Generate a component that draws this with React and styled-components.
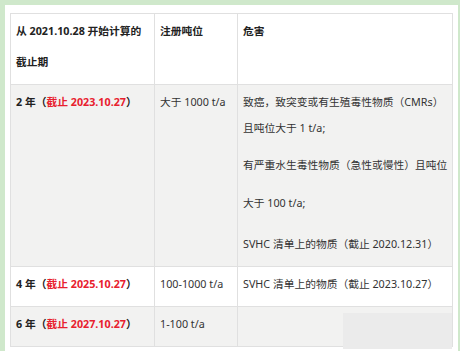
import styled, { createGlobalStyle } from "styled-components";

const GlobalStyle = createGlobalStyle`
  html, body {
    margin: 0;
    padding: 0;
    background: #cfe8cb;
  }
  body {
    font-family: "Noto Sans", "Noto Sans CJK SC", sans-serif;
    color: #333;
  }
`;

const Panel = styled.div`
  margin: 5px 2px 0 5px;
  padding: 8px 6px 0 5px;
  background: #fff;
  min-height: 100vh;
  position: relative;
`;

const Table = styled.table`
  width: 442px;
  border-collapse: collapse;
  table-layout: fixed;
  font-size: 10.75px;
`;

const Row = styled.tr`
  background: ${(props) => (props.shaded ? "#f2f2f1" : "#fff")};
`;

const Head = styled.th`
  border: 1px solid #e0e0e0;
  padding: 2px 5px 6px;
  line-height: 31px;
  text-align: left;
  vertical-align: top;
  font-weight: 700;
  color: #222;
`;

const Cell = styled.td`
  border: 1px solid #e0e0e0;
  padding: 4px 5px 9px;
  line-height: 26px;
  vertical-align: top;
  font-weight: ${(props) => (props.bold ? 700 : 400)};
  color: ${(props) => (props.bold ? "#222" : "#333")};
  white-space: nowrap;
`;

const Red = styled.span`
  color: #e8202e;
`;

const Line = styled.div`
  margin-top: ${(props) => props.gap || 0}px;
`;

const Cover = styled.div`
  position: absolute;
  left: 338px;
  top: 308px;
  width: 109px;
  height: 36px;
  background: #ebebeb;
`;

function Term({ years, date }) {
  return (
    <>
      {years} 年（<Red>截止 {date}</Red>）
    </>
  );
}

export default function App() {
  return (
    <>
      <GlobalStyle />
      <Panel>
        <Table>
          <colgroup>
            <col style={{ width: 144 }} />
            <col style={{ width: 83 }} />
            <col style={{ width: 215 }} />
          </colgroup>
          <thead>
            <Row>
              <Head>
                从 2021.10.28 开始计算的
                <br />
                截止期
              </Head>
              <Head>注册吨位</Head>
              <Head>危害</Head>
            </Row>
          </thead>
          <tbody>
            <Row shaded>
              <Cell bold>
                <Term years="2" date="2023.10.27" />
              </Cell>
              <Cell>大于 1000 t/a</Cell>
              <Cell>
                <Line>致癌，致突变或有生殖毒性物质（CMRs）</Line>
                <Line>且吨位大于 1 t/a;</Line>
                <Line gap={11}>有严重水生毒性物质（急性或慢性）且吨位</Line>
                <Line gap={12}>大于 100 t/a;</Line>
                <Line gap={15}>SVHC 清单上的物质（截止 2020.12.31）</Line>
              </Cell>
            </Row>
            <Row>
              <Cell bold>
                <Term years="4" date="2025.10.27" />
              </Cell>
              <Cell>100-1000 t/a</Cell>
              <Cell>SVHC 清单上的物质（截止 2023.10.27）</Cell>
            </Row>
            <Row shaded>
              <Cell bold>
                <Term years="6" date="2027.10.27" />
              </Cell>
              <Cell>1-100 t/a</Cell>
              <Cell></Cell>
            </Row>
          </tbody>
        </Table>
        <Cover />
      </Panel>
    </>
  );
}
